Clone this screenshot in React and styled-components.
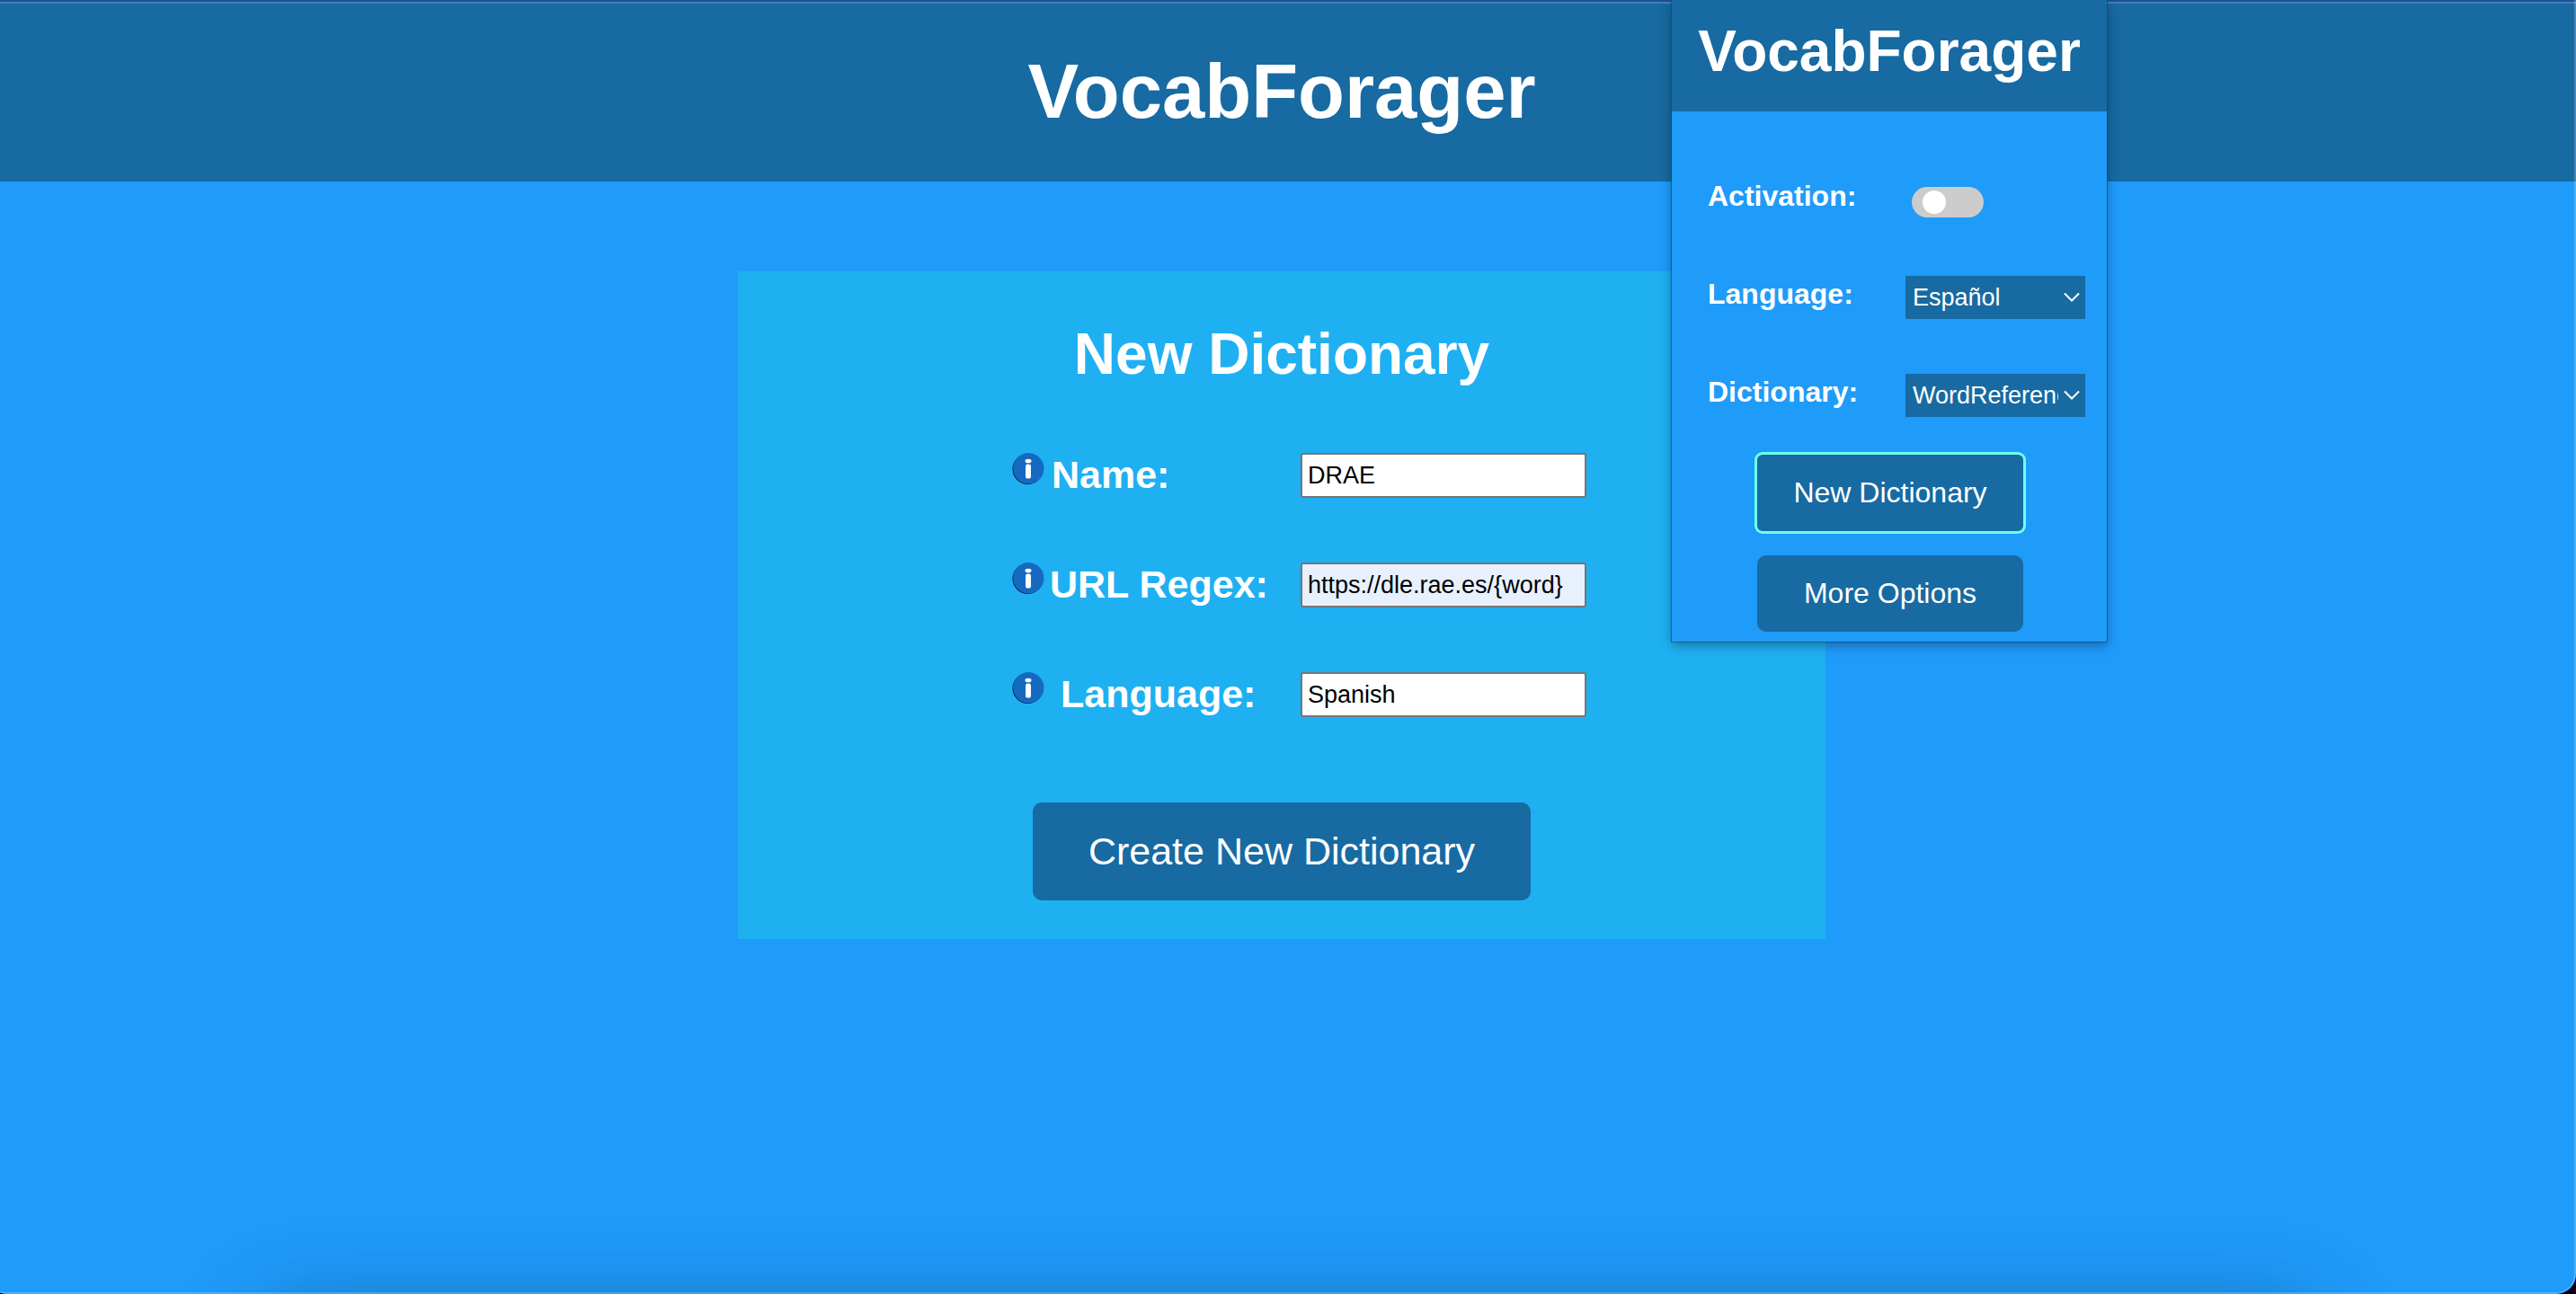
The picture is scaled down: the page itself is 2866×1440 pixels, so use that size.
import React, { useState } from "react";
import styled, { createGlobalStyle } from "styled-components";

const color = {
  bar: "#176aa2",
  page: "#1f9bfa",
  card: "#1fb0f2",
  focus: "#70ffec",
};

const GlobalStyle = createGlobalStyle`
  *, *::before, *::after { box-sizing: border-box; }
  body {
    margin: 0;
    background: ${color.page};
    color: #fff;
    font-family: Arial, "Liberation Sans", sans-serif;
  }
  button, input, select { font-family: inherit; }
`;

const Page = styled.div`
  position: relative;
  min-height: 100vh;
  overflow: hidden;
`;

const Header = styled.header`
  display: flex;
  justify-content: center;
  padding: 51px 14px 51px 0;
  border-top: 2px solid #1b5196;
  background: ${color.bar};
  box-shadow: inset 0 2px 0 #4a7db4;
`;

const Title = styled.h1`
  margin: 0;
  font-size: 85px;
  line-height: 98px;
`;

const Main = styled.main`
  display: flex;
  justify-content: center;
  padding: 100px 14px 100px 0;
`;

const Card = styled.form`
  display: flex;
  flex-direction: column;
  align-items: center;
  width: 100%;
  max-width: 1210px;
  padding: 55px 24px 43px;
  background: ${color.card};
`;

const Heading = styled.h2`
  margin: 0 0 73px;
  font-size: 64px;
  line-height: 74px;
`;

const Fields = styled.div`
  display: grid;
  gap: 72px;
  margin: 0 0 95px 39px;
`;

const Field = styled.div`
  display: grid;
  grid-template-columns: 36px 285px 318px;
  align-items: start;
`;

const FieldLabel = styled.label`
  padding-left: ${(p) => p.$indent}px;
  font-size: 43px;
  font-weight: bold;
  line-height: 48px;
`;

const TextInput = styled.input`
  width: 100%;
  height: 50px;
  padding: 0 6px;
  border: 2px solid #767676;
  border-radius: 3px;
  background: ${(p) => (p.$autofilled ? "#e8f0fe" : "#fff")};
  color: #000;
  font-size: 27px;
`;

const Button = styled.button`
  padding: 0;
  border: 0;
  border-radius: 10px;
  background: ${color.bar};
  color: #fff;
`;

const CreateButton = styled(Button)`
  width: 554px;
  height: 109px;
  font-size: 43px;
`;

const Popup = styled.aside`
  position: absolute;
  top: 0;
  right: 522px;
  width: 484px;
  padding-bottom: 11px;
  background: ${color.page};
  box-shadow: 0 0 0 1px rgba(20, 70, 110, 0.6), 0 4px 12px rgba(0, 0, 0, 0.35);
`;

const PopupHeader = styled.div`
  padding: 20px 0 30px;
  background: ${color.bar};
  text-align: center;
`;

const PopupTitle = styled.h2`
  margin: 0;
  font-size: 64px;
  line-height: 74px;
`;

const Settings = styled.div`
  display: grid;
  gap: 61px;
  padding: 74px 24px 42px 40px;
`;

const Setting = styled.div`
  display: flex;
  justify-content: space-between;
  height: 48px;
`;

const SettingLabel = styled.label`
  font-size: 32px;
  font-weight: bold;
  line-height: 40px;
`;

const SettingControl = styled.div`
  display: flex;
  position: relative;
  align-items: center;
  width: 200px;
`;

const Toggle = styled.input`
  appearance: none;
  display: flex;
  align-items: center;
  width: 80px;
  height: 34px;
  margin: 6px 0 0 7px;
  padding: 0 12px;
  border-radius: 17px;
  background: #ccc;

  &::before {
    content: "";
    width: 26px;
    height: 26px;
    border-radius: 50%;
    background: #fff;
  }

  &:checked {
    justify-content: flex-end;
    background: ${color.bar};
  }
`;

const Select = styled.select`
  appearance: none;
  width: 100%;
  height: 48px;
  padding: 0 30px 0 8px;
  border: 0;
  border-radius: 0;
  background: ${color.bar};
  color: #fff;
  font-size: 27px;
`;

const Chevron = styled.svg`
  position: absolute;
  right: 6px;
  top: 18px;
  width: 18px;
  height: 12px;
  pointer-events: none;
`;

const Actions = styled.div`
  display: flex;
  flex-direction: column;
  align-items: center;
  gap: 27px;
  padding-left: 2px;
`;

const PopupButton = styled(Button)`
  width: 296px;
  height: 85px;
  font-size: 32px;
  box-shadow: ${(p) => (p.$focused ? `0 0 0 3px ${color.focus}` : "none")};
  border-radius: ${(p) => (p.$focused ? 6 : 10)}px;
`;

const DockShadow = styled.div`
  position: absolute;
  left: 290px;
  right: 290px;
  bottom: -216px;
  height: 200px;
  border-radius: 40px;
  box-shadow: 0 0 90px rgba(10, 50, 80, 0.42);
  pointer-events: none;
`;

const WindowEdge = styled.div`
  position: absolute;
  inset: 0 0 0 -14px;
  border: solid rgba(255, 255, 255, 0.2);
  border-width: 0 2px 2px 0;
  border-radius: 0 0 22px 22px;
  box-shadow: 0 0 0 24px #08001c;
  pointer-events: none;
`;

const InfoIcon = () => (
  <svg width="36" height="36" viewBox="0 0 36 36" role="img" aria-label="Info">
    <circle cx="17.5" cy="18" r="17" fill="#06131f" />
    <circle cx="18.3" cy="17.3" r="17.2" fill="#1669c1" />
    <ellipse cx="18" cy="9" rx="3.5" ry="2.3" fill="#fff" />
    <rect x="15" y="12.500" width="6" height="16" rx="2.600" fill="#fff" />
  </svg>
);

const SelectSetting = ({ id, label, options }) => (
  <Setting>
    <SettingLabel htmlFor={id}>{label}</SettingLabel>
    <SettingControl>
      <Select id={id}>
        {options.map((o) => (
          <option key={o}>{o}</option>
        ))}
      </Select>
      <Chevron viewBox="0 0 18 12" fill="none" stroke="#fff" strokeWidth="2">
        <path d="M1 1.5l8 8 8-8" />
      </Chevron>
    </SettingControl>
  </Setting>
);

const fields = [
  { id: "name", label: "Name:", value: "DRAE", indent: 8 },
  { id: "regex", label: "URL Regex:", value: "https://dle.rae.es/{word}", indent: 6, autofilled: true },
  { id: "language", label: "Language:", value: "Spanish", indent: 18 },
];

export default function App() {
  const [active, setActive] = useState(false);
  return (
    <Page>
      <GlobalStyle />
      <Header>
        <Title>VocabForager</Title>
      </Header>
      <Main>
        <Card onSubmit={(e) => e.preventDefault()}>
          <Heading>New Dictionary</Heading>
          <Fields>
            {fields.map((f) => (
              <Field key={f.id}>
                <InfoIcon />
                <FieldLabel htmlFor={f.id} $indent={f.indent}>{f.label}</FieldLabel>
                <TextInput id={f.id} type="text" defaultValue={f.value} $autofilled={f.autofilled} />
              </Field>
            ))}
          </Fields>
          <CreateButton type="submit">Create New Dictionary</CreateButton>
        </Card>
      </Main>
      <Popup>
        <PopupHeader>
          <PopupTitle>VocabForager</PopupTitle>
        </PopupHeader>
        <Settings>
          <Setting>
            <SettingLabel htmlFor="activation">Activation:</SettingLabel>
            <SettingControl>
              <Toggle
                id="activation"
                type="checkbox"
                checked={active}
                onChange={(e) => setActive(e.target.checked)}
              />
            </SettingControl>
          </Setting>
          <SelectSetting id="popup-language" label="Language:" options={["Español"]} />
          <SelectSetting id="popup-dictionary" label="Dictionary:" options={["WordReference"]} />
        </Settings>
        <Actions>
          <PopupButton type="button" $focused>New Dictionary</PopupButton>
          <PopupButton type="button">More Options</PopupButton>
        </Actions>
      </Popup>
      <DockShadow />
      <WindowEdge />
    </Page>
  );
}
